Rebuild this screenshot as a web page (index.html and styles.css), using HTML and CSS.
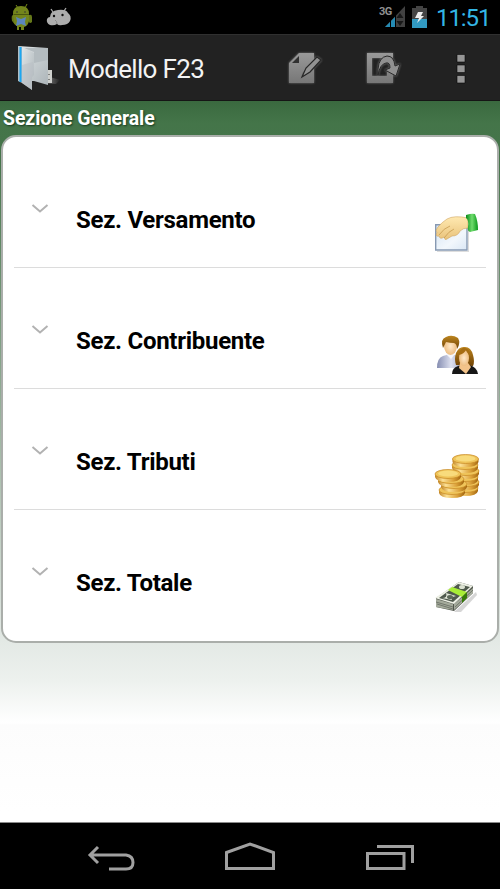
FILE: index.html
```html
<!DOCTYPE html>
<html lang="it">
<head>
<meta charset="utf-8">
<title>Modello F23</title>
<link rel="stylesheet" href="styles.css">
</head>
<body>
<div class="phone">
  <header class="status">
    <svg class="debug-icon" width="22" height="28" viewBox="0 0 22 28">
      <path d="M5 2l2 3M16 1l-2 4" stroke="#788d16" stroke-width="1"/>
      <path d="M2 11Q2 3 10 3T18 11V18Q17 23 13 24V27H10V24H8V27H6V23Q2 21 2 17Z" fill="#73851b"/>
      <path d="M18 12q3-1 3 2v5q-2 2-3 0zM2 12q-2 0-1 6l2 2" fill="#65781a"/>
      <path d="M2.500 11.500H18" stroke="#4a5710"/>
      <circle cx="6" cy="9" r=".8" fill="#333"/><circle cx="14" cy="9" r=".8" fill="#333"/>
      <path d="M5 14l5 2 5-2-1 5 1 4-5-2-5 2 1-5z" fill="#5b86bd"/>
    </svg>
    <svg class="droid-icon" width="26" height="20" viewBox="0 0 26 20">
      <path d="M7 5L5 2M18 4l2-3" stroke="#aaa" stroke-width="1.300"/>
      <path d="M4 10Q4 4 12 3T22 6Q26 9 24 14Q22 18 16 18Q13 19 11 17Q8 19 4 18Q0 16 1 12Q2 10 4 10Z" fill="#adadad"/>
      <circle cx="8" cy="9" r="1.200" fill="#111"/><circle cx="16.500" cy="8" r="1.200" fill="#111"/>
      <path d="M9 13q2 1 2 4" stroke="#888" fill="none"/>
    </svg>
    <span class="network">3G</span>
    <svg class="signal" width="20" height="22" viewBox="0 0 20 22">
      <path d="M0 21L20 0V21Z" fill="#414141"/>
      <path d="M0 21L5 16V21ZM6 15L10 11V21H6Z" fill="#258bb4"/>
      <path d="M5.500 14v7M10.500 9v12" stroke="#000"/>
      <path d="M15 7l3.500 5h-7zM15 20l3.500-5h-7z" fill="#181818"/>
    </svg>
    <svg class="battery" width="15" height="22" viewBox="0 0 15 22">
      <path d="M0 2H4V0H11V2H15V22H0Z" fill="#444"/><path d="M0 13H15V22H0Z" fill="#319ac2"/>
      <path d="M6 6H11L9 10H12L5 17L7 12H3Z" fill="#eee"/>
    </svg>
    <span class="clock">11:51</span>
  </header>
  <nav class="actions">
    <svg class="folder" width="44" height="50" viewBox="0 0 44 50">
      <defs>
        <linearGradient id="paper" x2="1" y2="1"><stop stop-color="#e1e5e7"/><stop offset=".5" stop-color="#c6cdd0"/><stop offset="1" stop-color="#adb5b9"/></linearGradient>
        <linearGradient id="shade"><stop stop-color="#888"/><stop offset="1" stop-color="#222"/></linearGradient>
      </defs>
      <path d="M33 32l10 3-4 4-11-1z" fill="url(#shade)"/>
      <path d="M30 25h5v13h-6z" fill="#ced0cd"/><path d="M32 29v1M32 34v1" stroke="#333"/>
      <path d="M1 1L31 3V40L17 36 1 36Z" fill="url(#paper)"/>
      <path d="M7 3L17 7V18L31 15V3Z" fill="#b4bcc0"/>
      <path d="M1 1L5 2V38L1 36Z" fill="#b1bec5"/><path d="M3.500 2V37" stroke="#1ca7f1" stroke-width="2"/>
      <path d="M5 2L17 8V30L15 32V45L5 38Z" fill="url(#paper)"/>
      <path d="M5 20L16 17V30L15 32V45L5 38Z" fill="#b9c0c4" opacity=".55"/>
    </svg>
    <h1 class="title">Modello F23</h1>
    <svg class="edit" width="36" height="34" viewBox="0 0 36 34">
      <defs><linearGradient id="metal" x2="0" y2="1"><stop stop-color="#999"/><stop offset="1" stop-color="#777"/></linearGradient></defs>
      <path d="M12 2H27V10L16 21L14 26L19 24L27 16V32H2V12Z" fill="url(#metal)"/>
      <path d="M5 12L12 5V12Z" fill="#303030"/>
      <path d="M15 26L19 17L30 6L34 9L23 21Z" fill="#929292" stroke="#272727" stroke-width="1.200"/>
    </svg>
    <svg class="export" width="36" height="34" viewBox="0 0 36 34">
      <path d="M2 2H28V7Q24 3 18 7H7V25H22V19L28 23V32H2Z" fill="url(#metal)"/>
      <path d="M13 24V18Q14 6 22 5Q29 5 30 15L35 13L31 25L20 19L25 17Q25 11 21 12Q15 13 13 24Z" fill="#909090" stroke="#2a2a2a" stroke-width="1"/>
    </svg>
    <svg class="more" width="10" height="32" viewBox="0 0 10 32"><path d="M1 1.500h8v7.500H1zM1 12h8v7.500H1zM1 22.500h8v7.500H1z" fill="#969696" stroke="#080808" stroke-width=".6"/></svg>
  </nav>
  <main class="content">
    <h2 class="section-title">Sezione Generale</h2>
    <section class="card">
      <div class="row">
        <svg class="chevron" width="18" height="10" viewBox="0 0 18 10"><path d="M1.500 1L9 7.500 16.500 1"/></svg>
        <span class="label">Sez. Versamento</span>
        <svg class="item-icon" width="48" height="46" viewBox="0 0 48 46">
          <defs>
            <linearGradient id="sheet" x2="1" y2="1"><stop stop-color="#d4e4f4"/><stop offset=".6" stop-color="#f2f7fc"/><stop offset="1" stop-color="#dae7f5"/></linearGradient>
            <linearGradient id="skin" x2="0" y2="1"><stop stop-color="#ffe9b1"/><stop offset="1" stop-color="#e9c37b"/></linearGradient>
            <linearGradient id="cuff" x2="1"><stop stop-color="#078b17"/><stop offset=".5" stop-color="#70dc6d"/><stop offset="1" stop-color="#08971a"/></linearGradient>
          </defs>
          <path d="M5 41h31V15l1 1v26H5z" fill="#aaa" opacity=".4"/>
          <path d="M3.700 14.700H35V40H3.700Z" fill="url(#sheet)" stroke="#8799b2" stroke-width="1.400"/>
          <path d="M15 9Q22 5 36 8L36 18Q31 18 28 21Q26 26 20 26L15 29Q13 31 12 27Q8 30 7 26Q3 27 5 22Q3 21 6 17Q9 13 15 9Z" fill="url(#skin)" stroke="#d0a662" stroke-width=".6"/>
          <path d="M7 25Q12 18 18 16M12 28Q17 21 22 19" stroke="#c79a50" stroke-width=".8" fill="none"/>
          <path d="M34 5Q40 3 43 4Q46 11 46 20L38 22Q35 21 36 17Q37 10 34 8Z" fill="url(#cuff)"/>
        </svg>
      </div>
      <div class="row">
        <svg class="chevron" width="18" height="10" viewBox="0 0 18 10"><path d="M1.500 1L9 7.500 16.500 1"/></svg>
        <span class="label">Sez. Contribuente</span>
        <svg class="item-icon" width="48" height="46" viewBox="0 0 48 46">
          <defs>
            <linearGradient id="shirt"><stop stop-color="#858db1"/><stop offset=".5" stop-color="#dde0ef"/><stop offset="1" stop-color="#969dbd"/></linearGradient>
            <linearGradient id="hair" x2="0" y2="1"><stop stop-color="#bd8620"/><stop offset="1" stop-color="#704203"/></linearGradient>
            <radialGradient id="face"><stop stop-color="#ffe9ca"/><stop offset="1" stop-color="#edbd82"/></radialGradient>
          </defs>
          <path d="M5 37Q5 27 11 25L18 23L27 25Q33 28 33 37Z" fill="url(#shirt)"/>
          <path d="M14 23L19 28L23 23V20H14Z" fill="#f5f6fa"/>
          <ellipse cx="18.500" cy="15" rx="6.500" ry="9" fill="url(#face)"/>
          <path d="M11 17Q8 8 14 6Q20 3 26 7Q29 12 25 18Q25 13 22 12Q18 12 14 11Z" fill="url(#hair)"/>
          <path d="M24 34Q22 28 24 22Q27 15 33 16Q39 16 41 24Q43 31 41 35Z" fill="url(#hair)"/>
          <path d="M20 43Q20 37 26 35L31 34H37Q45 36 46 43Z" fill="#171717"/>
          <path d="M28 32L27 37L34 43L39 36L36 32Z" fill="#f3c38a"/>
          <ellipse cx="32" cy="27" rx="5" ry="8" fill="url(#face)"/>
          <path d="M27 24Q32 23 34 19Q36 24 39 25Q37 16 31 17Q27 19 26 26Z" fill="#a66d13"/>
        </svg>
      </div>
      <div class="row">
        <svg class="chevron" width="18" height="10" viewBox="0 0 18 10"><path d="M1.500 1L9 7.500 16.500 1"/></svg>
        <span class="label">Sez. Tributi</span>
        <svg class="item-icon" width="48" height="48" viewBox="0 0 48 48">
          <defs>
            <linearGradient id="gold"><stop stop-color="#c28526"/><stop offset=".3" stop-color="#fce196"/><stop offset=".7" stop-color="#dca23a"/><stop offset="1" stop-color="#a3660f"/></linearGradient>
            <g id="coin"><path d="M0 3Q0 7 13 7T26 3V7Q25 12 13 12T0 7Z" fill="url(#gold)"/><ellipse cx="13" cy="4" rx="13" ry="4.500" fill="#efc45a" stroke="#c78824" stroke-width=".7"/></g>
          </defs>
          <use href="#coin" x="20" y="32"/><use href="#coin" x="21" y="26"/><use href="#coin" x="20" y="21"/><use href="#coin" x="21" y="15"/><use href="#coin" x="20" y="9"/><use href="#coin" x="20.500" y="3"/>
          <ellipse cx="33.500" cy="6.500" rx="10" ry="3" fill="#f8db7c"/>
          <use href="#coin" x="7" y="34"/><use href="#coin" x="9" y="28"/><use href="#coin" x="6" y="23"/><use href="#coin" x="3" y="18"/>
          <ellipse cx="16" cy="21.500" rx="10" ry="3" fill="#f8db7c"/>
        </svg>
      </div>
      <div class="row">
        <svg class="chevron" width="18" height="10" viewBox="0 0 18 10"><path d="M1.500 1L9 7.500 16.500 1"/></svg>
        <span class="label">Sez. Totale</span>
        <svg class="item-icon" width="48" height="46" viewBox="0 0 48 46">
          <path d="M22 39L44 19L45 22L29 39Z" fill="#bbb" opacity=".6"/>
          <path d="M4 25L27 9L41 13V20L22 38L4 34Z" fill="#50554c"/>
          <path d="M4 26L21 31V37L4 34ZM22 31L41 15V20L22 37Z" fill="#a4aa9b"/>
          <path d="M4 29L21 34M5 31L21 36M23 34L41 17" stroke="#646a5f" stroke-width=".8"/>
          <path d="M3 25L27 9L41 13L22 31Z" fill="#edf0e5"/>
          <path d="M7 25L26 11L38 14L21 29Z" fill="#4f594d"/>
          <path d="M10 25Q16 25 14 20L24 23Q18 24 20 27Z" fill="#e0e6d8"/>
          <ellipse cx="18" cy="24" rx="3" ry="2" fill="#5d695a"/>
          <ellipse cx="30" cy="14" rx="3" ry="2" fill="#dce2d2"/>
          <path d="M16 17L20 14L35 19L30 24Z" fill="#a8ed37"/>
          <path d="M30 24L35 19V25L30 30Z" fill="#377b08"/>
        </svg>
      </div>
    </section>
  </main>
  <footer class="navbar">
    <svg class="back" width="48" height="28" viewBox="0 0 48 28"><path d="M11 2L3 10L11 18M4 10H39Q46 11 46 17.500T39 24H22"/></svg>
    <svg class="home" width="52" height="30" viewBox="0 0 52 30"><path d="M2.500 11.500L26 3L49.500 11.500V27.500H2.500Z"/></svg>
    <svg class="recent" width="50" height="28" viewBox="0 0 50 28"><path d="M2.500 10.500H39V25.500H2.500ZM12 3.500H47.500V20"/></svg>
  </footer>
</div>
</body>
</html>
```
FILE: styles.css
```css
* { box-sizing: border-box; }
body { margin: 0; background: #000; font-family: Roboto, sans-serif; }
svg { display: block; flex: none; }
h1, h2 { margin: 0; }
.phone { width: 500px; height: 889px; display: flex; flex-direction: column; overflow: hidden; }
.status { height: 34px; flex: none; display: flex; align-items: flex-start; background: #000; padding-left: 11px; }
.debug-icon { margin-top: 3px; }
.droid-icon { margin: 7px 0 0 13px; }
.network { margin: 5px 0 0 307px; width: 15px; color: #909090; font: bold 11px/14px Roboto, sans-serif; letter-spacing: -0.5px; }
.signal { margin: 6px 0 0 -9px; }
.battery { margin: 6px 0 0 7px; }
.clock { margin: 4px 0 0 9px; color: #33b5e5; font-size: 24px; line-height: 28px; letter-spacing: -1.1px; white-space: nowrap; }
.actions { height: 67px; flex: none; display: flex; align-items: flex-start; background: #222; border-top: 1px solid #303030; border-bottom: 1px solid #151515; padding-left: 17px; }
.folder { margin-top: 10px; }
.title { width: 220px; margin: 18px 0 0 7px; color: #f3f3f3; font-weight: 400; font-size: 26px; line-height: 32px; letter-spacing: -0.67px; white-space: nowrap; }
.edit, .export { filter: drop-shadow(0 0 1px #777); }
.edit { margin: 16px 0 0 -1px; }
.export { margin: 16px 0 0 42px; }
.more { margin: 18px 0 0 55px; }
.content { flex: 1; min-height: 0; border-bottom: 1px solid #8a8a8a; background: linear-gradient(#3a693f 0, #447549 22px, #46744b 60px, #e3e9e5 540px, #edf1ee 580px, #fff 622px, #fcfcfc 624px, #fff 710px); }
.section-title { height: 34px; padding: 4px 0 0 3px; color: #fff; font-size: 19.5px; line-height: 28px; letter-spacing: -0.1px; text-shadow: 1px 1px 2px #17391d; white-space: nowrap; }
.card { height: 508px; margin: 0 1px; padding: 10px 11px 0; border: 2px solid #aaaeaa; border-radius: 15px; background: #fff; }
.row { height: 121px; display: flex; align-items: flex-start; border-bottom: 1px solid #dcdcdc; padding-left: 17px; }
.row:last-child { border: 0; }
.chevron { margin-top: 57px; }
.chevron path { fill: none; stroke: #b2b2b2; stroke-width: 2; }
.label { width: 356px; margin: 58px 0 0 27px; color: #000; font-size: 24px; line-height: 30px; font-weight: 700; letter-spacing: -0.28px; white-space: nowrap; }
.item-icon { margin-top: 63px; }
.navbar { height: 66px; flex: none; display: flex; background: #000; padding: 18px 0 0 87px; }
.navbar path { fill: none; stroke: #a0a0a0; stroke-width: 3; }
.back { margin-top: 4px; }
.home { margin-left: 89px; }
.recent { margin: 2px 0 0 89px; }
```
